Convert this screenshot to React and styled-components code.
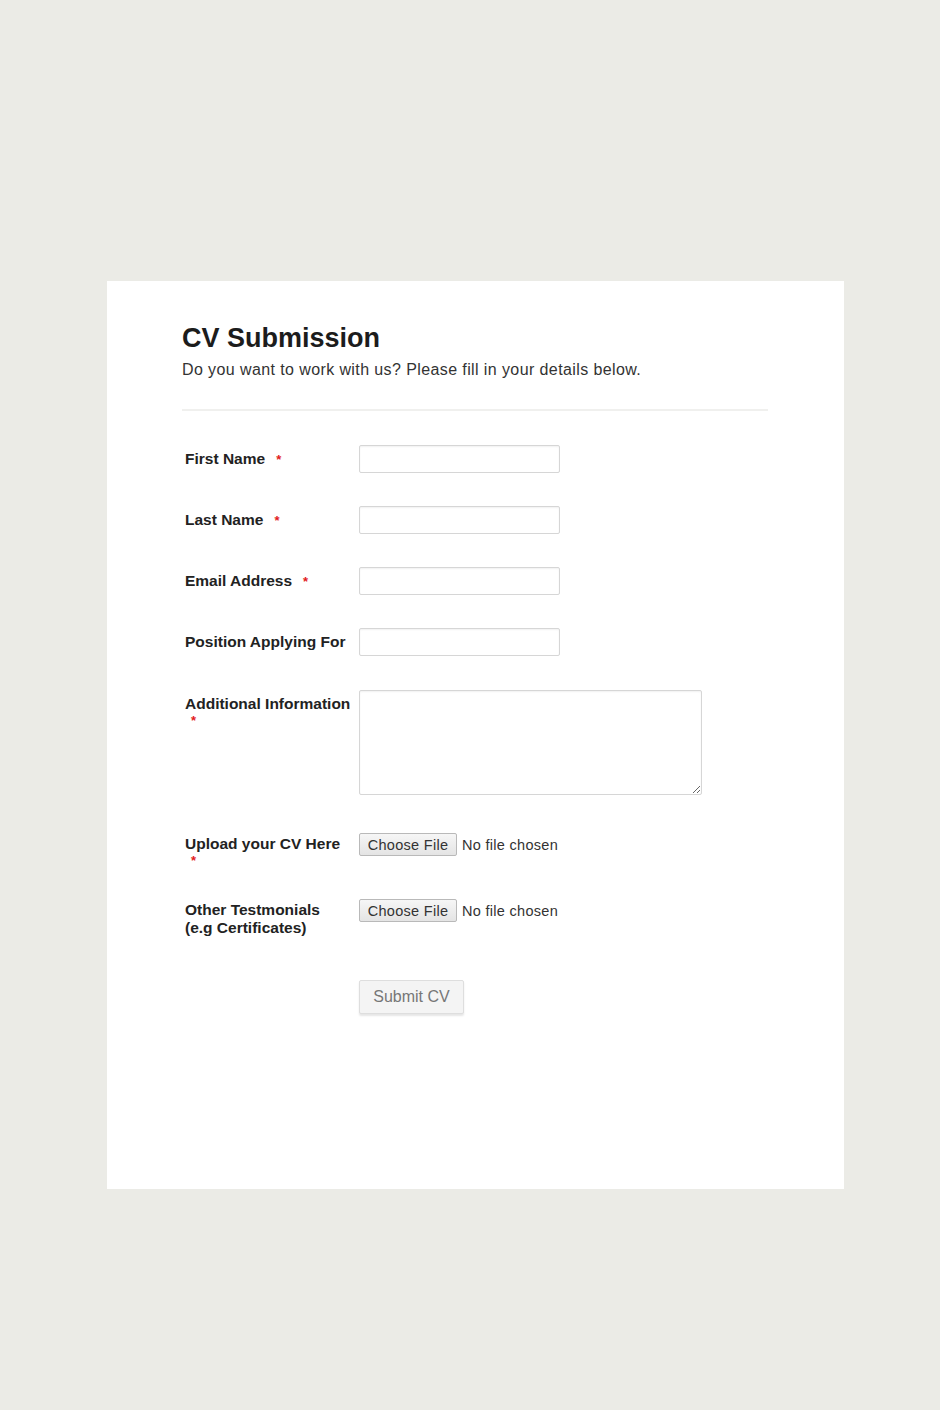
import React from "react";
import styled, { createGlobalStyle } from "styled-components";

const GlobalStyle = createGlobalStyle`
  html, body {
    margin: 0;
    padding: 0;
    background: #ebebe6;
  }
  body {
    font-family: "Liberation Sans", Arial, sans-serif;
    color: #1a1a1a;
  }
`;

// space = gap above the row, wrap = asterisk goes on its own line
const fields = [
  { id: "first", label: ["First Name"], required: true, type: "text", space: 0 },
  { id: "last", label: ["Last Name"], required: true, type: "text", space: 33 },
  { id: "email", label: ["Email Address"], required: true, type: "text", space: 33 },
  { id: "position", label: ["Position Applying For"], required: false, type: "text", space: 33 },
  { id: "info", label: ["Additional Information"], required: true, wrap: true, type: "textarea", space: 34 },
  { id: "cv", label: ["Upload your CV Here"], required: true, wrap: true, type: "file", space: 38 },
  { id: "other", label: ["Other Testmonials", "(e.g Certificates)"], required: false, type: "file", space: 30 },
];

const App = () => {
  return (
    <Page>
      <GlobalStyle />
      <Card>
        <Title>CV Submission</Title>
        <Subtitle>Do you want to work with us? Please fill in your details below.</Subtitle>
        <Divider />
        <Form onSubmit={(e) => e.preventDefault()}>
          {fields.map((f) => (
            <Row key={f.id} $space={f.space}>
              <Label htmlFor={f.id} $compact={f.type === "file"}>
                {f.label.map((line, i) => (
                  <React.Fragment key={i}>
                    {i > 0 && <br />}
                    {line}
                  </React.Fragment>
                ))}
                {f.required && <Required $wrap={!!f.wrap}>*</Required>}
              </Label>
              {f.type === "text" && <TextInput id={f.id} type="text" />}
              {f.type === "textarea" && <TextArea id={f.id} />}
              {f.type === "file" && (
                <FilePicker>
                  <FileButton type="button">Choose File</FileButton>
                  <FileStatus>No file chosen</FileStatus>
                </FilePicker>
              )}
            </Row>
          ))}
          <Row $space={43}>
            <span />
            <SubmitButton type="submit">Submit CV</SubmitButton>
          </Row>
        </Form>
      </Card>
    </Page>
  );
};

export default App;

const Page = styled.div`
  padding: 281px 0 222px 107px;
`;

const Card = styled.div`
  width: 737px;
  box-sizing: border-box;
  background: #ffffff;
  padding: 40px 76px 175px 75px;
`;

const Title = styled.h1`
  font-size: 27px;
  font-weight: 700;
  color: #1c1c1c;
  margin: 0;
  line-height: 34px;
`;

const Subtitle = styled.p`
  font-size: 16px;
  letter-spacing: 0.4px;
  color: #333333;
  margin: 5px 0 0;
  line-height: 20px;
`;

const Divider = styled.hr`
  border: none;
  border-top: 2px solid #f0f0ee;
  margin: 29px 0 0;
`;

const Form = styled.form`
  display: flex;
  flex-direction: column;
  padding: 34px 0 0 3px;
`;

const Row = styled.div`
  display: grid;
  grid-template-columns: 174px auto;
  align-items: start;
  margin-top: ${(p) => p.$space}px;
`;

const Label = styled.label`
  font-size: 15.5px;
  font-weight: 700;
  color: #222222;
  line-height: 18px;
  padding-top: ${(p) => (p.$compact ? 2 : 5)}px;
`;

const Required = styled.span`
  display: ${(p) => (p.$wrap ? "block" : "inline")};
  color: #e21b1b;
  margin-left: ${(p) => (p.$wrap ? 6 : 11)}px;
  font-size: 13px;
  line-height: ${(p) => (p.$wrap ? "16px" : "inherit")};
`;

const TextInput = styled.input`
  width: 201px;
  height: 28px;
  box-sizing: border-box;
  border: 1px solid #d6d6d6;
  border-radius: 2px;
  box-shadow: inset 0 1px 2px rgba(0, 0, 0, 0.06);
  background: #fff;
`;

const TextArea = styled.textarea`
  width: 343px;
  height: 105px;
  box-sizing: border-box;
  border: 1px solid #d6d6d6;
  border-radius: 2px;
  box-shadow: inset 0 1px 2px rgba(0, 0, 0, 0.06);
  background: #fff;
  margin: 0;
  display: block;
`;

const FilePicker = styled.div`
  display: flex;
  align-items: center;
  gap: 5px;
`;

const FileButton = styled.button`
  font-family: "Liberation Sans", Arial, sans-serif;
  font-size: 14.5px;
  letter-spacing: 0.3px;
  color: #333333;
  height: 23px;
  width: 98px;
  padding: 0;
  background: linear-gradient(#f6f6f6, #e4e4e4);
  border: 1px solid #b9b9b9;
  border-radius: 2px;
`;

const FileStatus = styled.span`
  font-size: 14.5px;
  letter-spacing: 0.3px;
  color: #333333;
`;

const SubmitButton = styled.button`
  font-family: "Liberation Sans", Arial, sans-serif;
  font-size: 16px;
  color: #777777;
  width: 105px;
  height: 34px;
  background: #f4f4f4;
  border: 1px solid #dedede;
  border-radius: 2px;
  box-shadow: 0 2px 2px rgba(0, 0, 0, 0.1);
`;
